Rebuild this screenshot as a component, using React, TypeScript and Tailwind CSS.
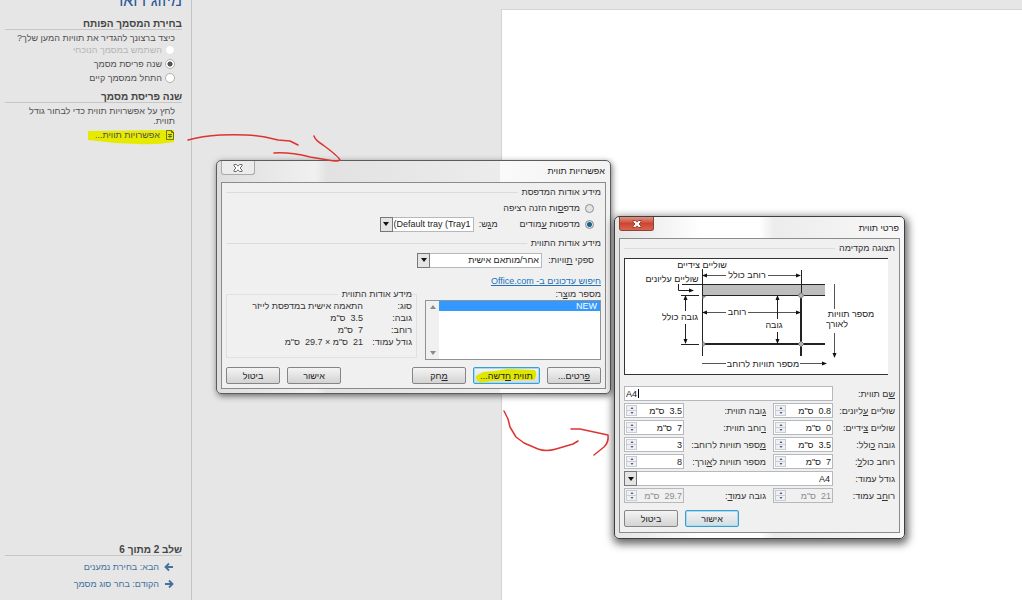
import type { ReactNode } from "react"

const App = () => {
    return (
        <div className="relative flex h-screen overflow-hidden bg-[#e6e6e6] font-['Liberation_Sans',sans-serif] text-[9px] leading-3 text-[#333]">
            <TaskPane />

            <main className="flex-1 pt-[9px] pl-[309px]">
                <div className="h-full border-t border-l border-[#d4d4d4] bg-white" />
            </main>

            <LabelOptionsDialog />
            <LabelDetailsDialog />
            <Arrows />
        </div>
    )
}

const TaskPane = () => {
    return (
        <aside dir="rtl" className="flex w-48 shrink-0 flex-col border-r border-[#c3c3c3] pr-[9px] pb-2 pl-[5px] text-[#505050]">
            <h1 className="-mt-2 h-5 text-base leading-[18px] text-[#2b579a]">מיזוג דואר</h1>

            <PaneHeading>בחירת המסמך הפותח</PaneHeading>
            <p className="mt-[2px] pr-[7px]">כיצד ברצונך להגדיר את תוויות המען שלך?</p>
            <div className="-mt-px pr-[7px]">
                <PaneRadio label="השתמש במסמך הנוכחי" disabled />
                <PaneRadio label="שנה פריסת מסמך" checked />
                <PaneRadio label="התחל ממסמך קיים" />
            </div>

            <PaneHeading>שנה פריסת מסמך</PaneHeading>
            <p className="mt-[3px] pr-[7px] leading-[10px]">
                לחץ על אפשרויות תווית כדי לבחור גודל תווית.
            </p>
            <a href="#options" className="relative mt-[3px] mr-[7px] flex items-center gap-[5px] self-start">
                <svg viewBox="0 0 89 16" className="absolute top-0 -right-px h-4 w-[89px]">
                    <path d="M1 2 L87 1 L87 13 Q70 16 50 15 L28 14 L1 11 Z" fill="#e6ea00" />
                </svg>
                <svg viewBox="0 0 10 10" className="relative h-[10px] w-[10px]" fill="none" stroke="#4d5528">
                    <path d="M1.500.5h5l2 2v7h-7z M6.500.500v2h2 M3 4.500h4 M3 6.500h4 M5 4v4" strokeWidth=".8" />
                </svg>
                <span className="relative">אפשרויות תווית...</span>
            </a>

            <div className="mt-auto">
                <PaneHeading>שלב 2 מתוך 6</PaneHeading>
                <nav className="flex flex-col items-start gap-px pt-[3px] pr-2 text-[#44709f]">
                    <PaneLink label="הבא: בחירת נמענים" path="M9 5H2 M5 1.500 1.500 5 5 8.500" />
                    <PaneLink label="הקודם: בחר סוג מסמך" path="M1 5h7 M5 1.500 8.500 5 5 8.500" />
                </nav>
            </div>
        </aside>
    )
}

const PaneHeading = ({ children }: { children: ReactNode }) => (
    <h2 className="mt-[6px] h-3 border-b border-[#c6c6c6] text-[10px] leading-3 font-bold text-[#444]">
        {children}
    </h2>
)

type PaneRadioProps = {
    label: string
    checked?: boolean
    disabled?: boolean
}

const PaneRadio = ({ label, checked, disabled }: PaneRadioProps) => (
    <label className={disabled ? "flex h-[14px] items-center gap-[3px] text-[#b5b5b5]" : "flex h-[14px] items-center gap-[3px]"}>
        <input
            type="radio"
            name="start"
            defaultChecked={checked}
            disabled={disabled}
            className="h-[10px] w-[10px] appearance-none rounded-full border border-[#b0b0b0] bg-white checked:bg-[radial-gradient(#555_40%,#fff_50%)] disabled:border-[#e2e2e2]"
        />
        {label}
    </label>
)

const PaneLink = ({ label, path }: { label: string; path: string }) => (
    <a href="#step" className="flex h-4 items-center gap-[5px]">
        <svg viewBox="0 0 10 10" className="h-[10px] w-[10px]" fill="none" stroke="currentColor" strokeWidth="1.800">
            <path d={path} />
        </svg>
        {label}
    </a>
)

const LabelOptionsDialog = () => {
    return (
        <section
            dir="rtl"
            className="absolute top-[160px] left-[216px] w-[395px] rounded-[5px] border border-[#5c5c5c] bg-[linear-gradient(90deg,#dedede,#f0f0f0_25%,#e2e2e2_28%,#ececec_72%,#fafafa_72%,#f2f2f2)] px-1 pb-1 shadow-[1px_2px_6px_rgba(0,0,0,0.55)]"
        >
            <header className="flex h-[21px] items-start justify-between pr-px">
                <h2 className="leading-[21px] text-[#222]">אפשרויות תווית</h2>
                <button aria-label="סגור" className="flex h-[14px] w-[34px] items-center justify-center rounded-b-[3px] border border-t-0 border-[#aaa] bg-[#ececec]">
                    <CloseGlyph color="#5b6168" />
                </button>
            </header>

            <div className="border border-[#8b8b8b] bg-[#f0f0f0] px-[4px] pt-px pb-1">
                <GroupHeading>מידע אודות המדפסת</GroupHeading>
                <DialogRadio name="printer">מדפ<u>ס</u>ות הזנה רציפה</DialogRadio>
                <div className="flex h-4 items-center">
                    <DialogRadio name="printer" checked>מדפסות <u>ע</u>מודים</DialogRadio>
                    <label htmlFor="tray" className="mr-[22px] w-6">מ<u>ג</u>ש:</label>
                    {/* the mark keeps the opening bracket on the left */}
                    <Dropdown id="tray" className="w-[94px]" value={"\u200e(Default tray (Tray1"} />
                </div>

                <div className="pt-[3px]">
                    <GroupHeading>מידע אודות התווית</GroupHeading>
                </div>
                <div className="flex h-[18px] items-center pr-[7px]">
                    <label htmlFor="vendor" className="w-[52px]">ספקי <u>ת</u>וויות:</label>
                    <Dropdown id="vendor" className="w-[125px]" value="אחר/מותאם אישית" />
                </div>
                <a href="#updates" className="mt-[6px] block w-fit leading-3 text-[#2273b9] underline">חיפוש עדכונים ב- Office.com</a>

                <div className="flex gap-2 pt-px">
                    <div className="w-[176px]">
                        <label htmlFor="products" className="block">מספר מו<u>צ</u>ר:</label>
                        <div id="products" role="listbox" tabIndex={0} className="flex h-[60px] flex-row border border-[#8e9399] bg-white">
                            <div role="option" aria-selected className="h-[10px] flex-1 bg-[#3399ff] pr-[3px] leading-[10px] text-white">
                                NEW
                            </div>
                            <div className="flex w-[13px] flex-col items-center justify-between bg-[#f0f0f0] py-1 text-[#8a8a8a]">
                                <Triangle up />
                                <Triangle />
                            </div>
                        </div>
                    </div>

                    <fieldset className="h-[70px] flex-1 border border-[#e0e0e0] pr-1">
                        <legend className="pl-1">מידע אודות התווית</legend>
                        <dl className="grid grid-cols-[49px_1fr] whitespace-pre">
                            <dt>סוג:</dt>
                            <dd>התאמה אישית במדפסת לייזר</dd>
                            <dt>גובה:</dt>
                            <dd>{'3.5  ס"מ'}</dd>
                            <dt>רוחב:</dt>
                            <dd>{'7  ס"מ'}</dd>
                            <dt>גודל עמוד:</dt>
                            <dd>{'21  ס"מ × 29.7  ס"מ'}</dd>
                        </dl>
                    </fieldset>
                </div>

                <footer className="mt-[7px] flex gap-[7px]">
                    <DialogButton><u>פ</u>רטים...</DialogButton>
                    <button className="relative h-[17px] w-[67px] rounded-xs border border-[#3c9dd0] bg-linear-to-b from-[#f4f4f4] to-[#d8d8d8] text-[#222] ring-1 ring-[#a5dcf3] ring-inset">
                        <svg viewBox="0 0 64 15" className="absolute top-0 left-px h-[15px] w-16">
                            <path d="M1 8 L8 4 L20 3 L32 1 L60 2 Q63 7 59 12 L40 12 L16 13 L6 15 Q0 12 1 8Z" fill="#dfe600" />
                        </svg>
                        <span className="relative">תווית <u>ח</u>דשה...</span>
                    </button>
                    <DialogButton><u>מ</u>חק</DialogButton>
                    <div className="mr-auto flex gap-[7px]">
                        <DialogButton>אישור</DialogButton>
                        <DialogButton>ביטול</DialogButton>
                    </div>
                </footer>
            </div>
        </section>
    )
}

const LabelDetailsDialog = () => {
    return (
        <section
            dir="rtl"
            className="absolute top-[216px] left-[614px] w-[291px] rounded-[5px] border border-[#3f3f3f] bg-[linear-gradient(90deg,#e4e4e4,#fff_30%,#fff_50%,#ececec_55%,#f8f8f8)] px-1 pb-[5px] shadow-[1px_3px_9px_2px_rgba(0,0,0,0.6)]"
        >
            <header className="flex h-[21px] items-start justify-between pr-px">
                <h2 className="leading-[23px] text-[#222]">פרטי תווית</h2>
                <button aria-label="סגור" className="flex h-[14px] w-[35px] items-center justify-center rounded-b-[3px] border border-t-0 border-[#8b4238] bg-linear-to-b from-[#dd9283] via-[#cd4530] to-[#d9654f]">
                    <CloseGlyph color="#8a3b30" />
                </button>
            </header>

            <div className="border border-[#8b8b8b] bg-[#f0f0f0] px-1 pt-px pb-[5px]">
                <GroupHeading>תצוגה מקדימה</GroupHeading>
                <LabelPreview />

                <form className="mt-[11px] grid grid-cols-[62px_60px_1fr_60px] items-center gap-y-[2px]">
                    <label htmlFor="label-name"><u>ש</u>ם תווית:</label>
                    <div className="relative col-span-3 h-[15px]">
                        <input id="label-name" dir="ltr" defaultValue="A4" className="h-full w-full border border-[#b5b8bd] bg-white px-px text-[#111]" />
                        <span className="absolute top-[3px] left-[14px] h-[9px] w-px bg-black" />
                    </div>

                    <SpinField id="top" label={<>שוליים <u>ע</u>ליונים:</>} value={'0.8  ס"מ'} />
                    <SpinField id="height" label={<><u>ג</u>ובה תווית:</>} value={'3.5  ס"מ'} inner />
                    <SpinField id="side" label={<>שוליים <u>צ</u>ידיים:</>} value={'0  ס"מ'} />
                    <SpinField id="width" label={<><u>ר</u>וחב תווית:</>} value={'7  ס"מ'} inner />
                    <SpinField id="pitch-v" label={<>גובה <u>כ</u>ולל:</>} value={'3.5  ס"מ'} />
                    <SpinField id="across" label={<><u>מ</u>ספר תוויות לרוחב:</>} value="3" inner />
                    <SpinField id="pitch-h" label={<>רוחב כול<u>ל</u>:</>} value={'7  ס"מ'} />
                    <SpinField id="down" label={<>מספר תוויות ל<u>א</u>ורך:</>} value="8" inner />

                    <label htmlFor="page-size">גודל עמוד:</label>
                    <Dropdown id="page-size" className="col-span-3" value="A4" />

                    <SpinField id="page-w" label={<>רו<u>ח</u>ב עמוד:</>} value={'21  ס"מ'} disabled />
                    <SpinField id="page-h" label={<>גובה עמו<u>ד</u>:</>} value={'29.7  ס"מ'} inner disabled />
                </form>

                <footer className="mt-[7px] flex justify-end gap-[7px]">
                    <DialogButton primary>אישור</DialogButton>
                    <DialogButton>ביטול</DialogButton>
                </footer>
            </div>
        </section>
    )
}

const GroupHeading = ({ children }: { children: ReactNode }) => (
    <div className="flex h-4 items-center gap-1">
        <h3>{children}</h3>
        <div className="h-px flex-1 bg-[#dcdcdc]" />
    </div>
)

type DialogRadioProps = {
    name: string
    checked?: boolean
    children: ReactNode
}

const DialogRadio = ({ name, checked, children }: DialogRadioProps) => (
    <label className="flex h-4 items-center gap-[5px] pr-[7px]">
        <input
            type="radio"
            name={name}
            defaultChecked={checked}
            className="h-[9px] w-[9px] appearance-none rounded-full border border-[#8e8f8f] bg-[#e4e4e4] checked:bg-[radial-gradient(#1d5f86_40%,#cfe3ee_60%)]"
        />
        <span>{children}</span>
    </label>
)

const Dropdown = ({ id, value, className }: { id: string; value: string; className: string }) => (
    <div className={`relative h-[15px] ${className}`}>
        <select id={id} className="h-full w-full appearance-none border border-[#b5b8bd] bg-white pr-[2px] pl-[13px] text-[#222]">
            <option>{value}</option>
        </select>
        <span className="pointer-events-none absolute inset-y-0 left-0 flex w-[13px] items-center justify-center border border-[#777] bg-[#e4e4e4] text-[#111]">
            <Triangle />
        </span>
    </div>
)

type SpinFieldProps = {
    id: string
    label: ReactNode
    value: string
    inner?: boolean
    disabled?: boolean
}

const SpinField = ({ id, label, value, inner, disabled }: SpinFieldProps) => (
    <>
        <label htmlFor={id} className={inner ? "pr-[7px] whitespace-nowrap" : "whitespace-nowrap"}>{label}</label>
        <div className="flex h-[15px] border border-[#b5b8bd] bg-white p-px has-disabled:bg-[#f0f0f0]">
            <input id={id} defaultValue={value} disabled={disabled} className="w-0 flex-1 text-[#222] disabled:text-[#8c8c8c]" />
            <div className="flex w-[11px] flex-col text-[#4b5a78]">
                <button type="button" aria-label="הגדל" className="flex flex-1 items-center justify-center border border-[#c9ccd4] bg-[#eef0f4]">
                    <Triangle small up />
                </button>
                <button type="button" aria-label="הקטן" className="flex flex-1 items-center justify-center border border-t-0 border-[#c9ccd4] bg-[#eef0f4]">
                    <Triangle small />
                </button>
            </div>
        </div>
    </>
)

const DialogButton = ({ primary, children }: { primary?: boolean; children: ReactNode }) => (
    <button
        className={
            primary
                ? "h-[17px] w-[54px] rounded-xs border border-[#3c9dd0] bg-linear-to-b from-[#f4f4f4] to-[#d3dde2] text-[#222] ring-1 ring-[#a5dcf3] ring-inset"
                : "h-[17px] w-[54px] rounded-xs border border-[#858585] bg-linear-to-b from-[#f4f4f4] to-[#d3d3d3] text-[#222]"
        }
    >
        {children}
    </button>
)

const Triangle = ({ up, small }: { up?: boolean; small?: boolean }) => (
    <svg viewBox="0 0 6 4" className={small ? "h-[2px] w-1" : "h-1 w-[6px]"} fill="currentColor">
        <path d={up ? "M0 4h6L3 0z" : "M0 0h6L3 4z"} />
    </svg>
)

const CloseGlyph = ({ color }: { color: string }) => (
    <svg viewBox="0 0 10 8" className="h-2 w-[10px]" fill="#fff" stroke={color} strokeWidth=".9">
        <path d="M1 .500h2.500L5 2.200 6.500.500H9V2L7 4l2 2v1.500H6.500L5 5.800 3.500 7.500H1V6l2-2-2-2z" />
    </svg>
)

const LabelPreview = () => (
    <svg viewBox="1 1 263 115" className="mt-[2px] mr-[7px] block h-[117px] w-[264px] border-y border-l border-[#333] bg-white" fontSize="9" stroke="#222" fill="none">
        <rect x="78" y="26" width="123" height="12" fill="#bdbdbd" stroke="none" />
        <path d="M58 26.500H201 M78 37.500H201" />
        <path d="M78.500 11V98" />
        <path d="M177.500 12V38" />
        <path d="M177 38V98 M78 86H201" strokeWidth="2" />

        <path d="M82 17.500H102 M144 17.500H174" stroke="#555" />
        <path d="M82 54.500H102 M124 54.500H174" stroke="#555" />
        <path d="M78 105.500H102 M176 105.500H198" stroke="#555" />
        <path d="M54.500 26V32.500H65" />
        <path d="M57 37.500H75 M57 86.500H75 M61.500 41V53 M61.500 66V83" />
        <path d="M153.500 41V61 M153.500 74V83" />
        <path d="M210.500 26V51 M210.500 75V96" stroke="#555" />

        <g fill="#111" stroke="none">
            <path d="M78 17.500l5-2v4z M177 17.500l-5-2v4z" />
            <path d="M78 54.500l5-2v4z M177 54.500l-5-2v4z" />
            <path d="M203 105.500l-5-2v4z M70 32.500l-5-2v4z" />
            <path d="M61.500 37l-2 5h4z M61.500 86l-2-5h4z" />
            <path d="M153.500 37l-2 5h4z M153.500 86l-2-5h4z" />
            <path d="M210.500 100l-2-5h4z" />
        </g>
        <g fill="#b5b5b5" stroke="#555" strokeWidth=".7">
            <path d="M177 34.500l3 3-3 3-3-3z M177 83l3 3-3 3-3-3z M78.500 83l3 3-3 3z M78.500 38h3l-3 3z" />
        </g>

        <g fill="#222" stroke="none" textAnchor="middle">
            <text x="78" y="10">שוליים צידיים</text>
            <text x="48" y="24">שוליים עליונים</text>
            <text x="123" y="20">רוחב כולל</text>
            <text x="113" y="57">רוחב</text>
            <text x="56" y="62">גובה כולל</text>
            <text x="150" y="70">גובה</text>
            <text x="139" y="109">מספר תוויות לרוחב</text>
            <text x="227" y="59">מספר תוויות</text>
            <text x="213" y="69">לאורך</text>
        </g>
    </svg>
)

const Arrows = () => (
    <svg viewBox="0 0 1022 600" className="pointer-events-none absolute top-0 left-0 h-[600px] w-[1022px]" fill="none" stroke="#dc3531" strokeWidth="1.500" strokeLinecap="round" strokeLinejoin="round">
        <path d="M188 140 Q202 136 220 135 Q250 134 265 137 L278 140 L290 141 L298 145" />
        <path d="M314 136 Q315 140 323 145 Q338 156 340 160 Q338 162 328 160 L310 157 Q290 152 274 153" />
        <path d="M504 411 L508 419 L510 427 L516 437 L524 443 L538 449 Q546 452 556 449 L573 444 L578 441" />
        <path d="M571 429 L580 429 L608 435 Q609 442 604 447 L594 455" />
    </svg>
)

export default App
